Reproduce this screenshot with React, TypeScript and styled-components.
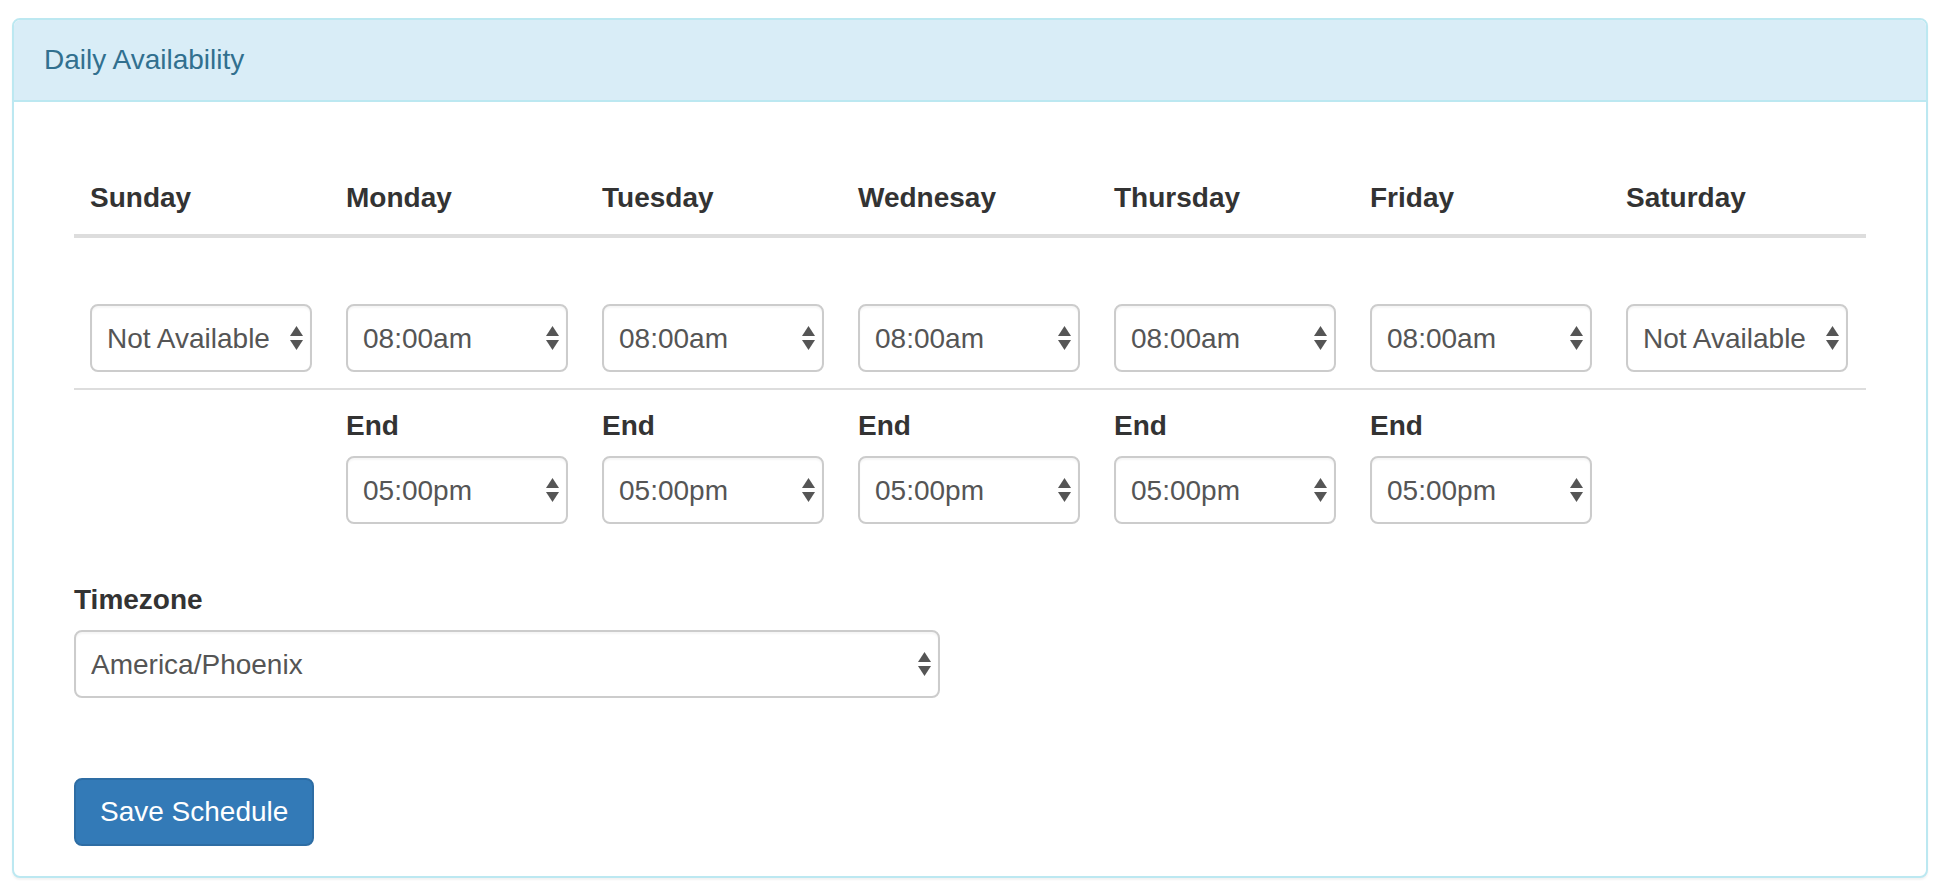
import React from "react";
import styled, { createGlobalStyle } from "styled-components";

const GlobalStyle = createGlobalStyle`
  html, body { margin: 0; padding: 0; background: #fff; }
  body {
    font-family: "Liberation Sans", Arial, Helvetica, sans-serif;
    font-size: 28px;
    line-height: 40px;
    color: #333;
  }
  * { box-sizing: border-box; }
`;

const Page = styled.div`
  padding: 18px 18px 16px 12px;
`;

const Panel = styled.section`
  border: 2px solid #bce8f1;
  border-radius: 8px;
  background: #fff;
  box-shadow: 0 2px 2px rgba(0, 0, 0, 0.05);
  overflow: hidden;
`;

const PanelHeading = styled.header`
  background: #d9edf7;
  color: #31708f;
  padding: 20px 30px;
  border-bottom: 2px solid #bce8f1;
`;

const PanelTitle = styled.h3`
  margin: 0;
  font-size: 28px;
  font-weight: normal;
  line-height: 40px;
`;

const PanelBody = styled.div`
  padding: 30px;
`;

const Content = styled.div`
  padding: 30px 30px 0;
`;

const Table = styled.table`
  width: 100%;
  table-layout: fixed;
  border-collapse: separate;
  border-spacing: 0;
  margin-bottom: 40px;
`;

const Th = styled.th`
  text-align: left;
  font-weight: bold;
  padding: 16px;
  line-height: 40px;
  border-bottom: 4px solid #ddd;
  vertical-align: bottom;
`;

const Td = styled.td<{ $bordered?: boolean }>`
  padding: 16px;
  vertical-align: top;
  border-top: ${(p) => (p.$bordered ? "2px solid #ddd" : "0")};
`;

const Label = styled.label`
  display: block;
  font-weight: bold;
  line-height: 40px;
  height: 40px;
  margin-bottom: 10px;
  color: #333;
`;

const SelectWrap = styled.div<{ $width: number }>`
  position: relative;
  width: ${(p) => p.$width}px;
`;

const NativeSelect = styled.select`
  appearance: none;
  -webkit-appearance: none;
  display: block;
  width: 100%;
  height: 68px;
  padding: 0 34px 0 15px;
  font-family: inherit;
  font-size: 28px;
  color: #555;
  background: #fff;
  border: 2px solid #ccc;
  border-radius: 8px;
  box-shadow: inset 0 2px 2px rgba(0, 0, 0, 0.04);
  outline: none;
`;

const Arrows = styled.svg`
  position: absolute;
  right: 9px;
  top: 50%;
  margin-top: -12px;
  pointer-events: none;
`;

const FormGroup = styled.div`
  margin-bottom: 80px;
`;

const Button = styled.button`
  display: inline-block;
  font-family: inherit;
  font-size: 28px;
  line-height: 40px;
  padding: 12px 24px;
  color: #fff;
  background: #337ab7;
  border: 2px solid #2e6da4;
  border-radius: 8px;
  cursor: pointer;
`;

function Select({ value, width }: { value: string; width: number }) {
  return (
    <SelectWrap $width={width}>
      <NativeSelect defaultValue={value}>
        <option>{value}</option>
      </NativeSelect>
      <Arrows width="13" height="24" viewBox="0 0 13 24">
        <polygon points="0,10 6.5,0 13,10" fill="#555" />
        <polygon points="0,14 13,14 6.5,24" fill="#555" />
      </Arrows>
    </SelectWrap>
  );
}

const days = ["Sunday", "Monday", "Tuesday", "Wednesay", "Thursday", "Friday", "Saturday"];
const starts = ["Not Available", "08:00am", "08:00am", "08:00am", "08:00am", "08:00am", "Not Available"];

export default function App() {
  return (
    <>
      <GlobalStyle />
      <Page>
        <Panel>
          <PanelHeading>
            <PanelTitle>Daily Availability</PanelTitle>
          </PanelHeading>
          <PanelBody>
            <Content>
              <Table>
                <thead>
                  <tr>
                    {days.map((d) => (
                      <Th key={d}>{d}</Th>
                    ))}
                  </tr>
                </thead>
                <tbody>
                  <tr>
                    {starts.map((s, i) => (
                      <Td key={i}>
                        <Label />
                        <Select value={s} width={222} />
                      </Td>
                    ))}
                  </tr>
                  <tr>
                    {starts.map((s, i) => (
                      <Td key={i} $bordered>
                        {s === "Not Available" ? null : (
                          <>
                            <Label>End</Label>
                            <Select value="05:00pm" width={222} />
                          </>
                        )}
                      </Td>
                    ))}
                  </tr>
                </tbody>
              </Table>
              <FormGroup>
                <Label>Timezone</Label>
                <Select value="America/Phoenix" width={866} />
              </FormGroup>
              <Button type="button">Save Schedule</Button>
            </Content>
          </PanelBody>
        </Panel>
      </Page>
    </>
  );
}
